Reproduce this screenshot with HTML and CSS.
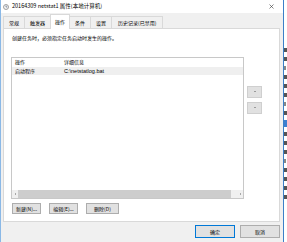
FILE: index.html
```html
<!DOCTYPE html>
<html lang="zh-CN">
<head>
    <meta charset="UTF-8">
    <title>20164309 netstat1 属性(本地计算机)</title>
    <link rel="stylesheet" href="styles.css">
</head>
<body>
    <div class="screen">
        <div class="dialog">
            <div class="titlebar">
                <svg class="app-icon" width="6" height="6" viewBox="0 0 6 6">
                    <circle cx="3" cy="3" r="2.5" fill="#f4f4f4" stroke="#8a8a8a" stroke-width="0.8"/>
                    <path d="M3 1.5 V3 H4.2" fill="none" stroke="#5b6f8a" stroke-width="0.7"/>
                </svg>
                <span class="title">20164309 netstat1 属性(本地计算机)</span>
                <svg class="close" width="5" height="5" viewBox="0 0 5 5">
                    <path d="M0.5 0.5 L4.5 4.5 M4.5 0.5 L0.5 4.5" stroke="#333" stroke-width="0.6"/>
                </svg>
            </div>

            <div class="tabs">
                <div class="tab">常规</div>
                <div class="tab">触发器</div>
                <div class="tab active">操作</div>
                <div class="tab">条件</div>
                <div class="tab">设置</div>
                <div class="tab wide">历史记录(已禁用)</div>
            </div>

            <div class="panel">
                <p class="hint">创建任务时，必须指定任务启动时发生的操作。</p>
                <div class="list-area">
                    <div class="listbox">
                        <div class="row head">
                            <span class="col-action">操作</span>
                            <span>详细信息</span>
                        </div>
                        <div class="row selected">
                            <span class="col-action">启动程序</span>
                            <span class="latin">C:\netstatlog.bat</span>
                        </div>
                        <div class="list-fill"></div>
                        <div class="hscroll">
                            <span class="arrow left"></span>
                            <div class="thumb"></div>
                            <span class="arrow right"></span>
                        </div>
                    </div>
                    <div class="updown">
                        <div class="ud-btn"><span class="tri up"></span></div>
                        <div class="ud-btn"><span class="tri down"></span></div>
                    </div>
                </div>
                <div class="actions">
                    <div class="btn w-new">新建(N)...</div>
                    <div class="btn w-edit">编辑(E)...</div>
                    <div class="btn w-del">删除(D)</div>
                </div>
            </div>

            <div class="footer">
                <div class="btn big primary">确定</div>
                <div class="btn big">取消</div>
            </div>
        </div>

        <!-- strip of the window behind the dialog -->
        <div class="edge">
            <i></i><i></i><i class="short"></i><i></i><i></i><i></i>
            <i class="short"></i><i></i><i class="hl"></i><i></i><i></i>
            <i></i><i class="short"></i><i></i><i></i><i></i><i></i>
        </div>
    </div>
</body>
</html>
```

FILE: styles.css
```css
body {
    margin: 0;
    background: #ffffff;
    font-family: "Noto Sans CJK SC", "Liberation Sans", sans-serif;
    font-size: 5px;
    color: #000;
}
.screen {
    display: flex;
    width: 287px;
    height: 242px;
    overflow: hidden;
}
.dialog {
    width: 282px;
    height: 242px;
    background: #f0f0f0;
    border-left: 1px solid #8ab8e6;
    border-right: 1px solid #3c7fc8;
    display: flex;
    flex-direction: column;
    flex-shrink: 0;
}
.titlebar {
    height: 13px;
    background: #fff;
    display: flex;
    align-items: center;
    padding-left: 2px;
}
.app-icon {
    margin-right: 3px;
}
.title {
    font-size: 5.5px;
    line-height: 13px;
    flex-grow: 1;
}
.close {
    margin-right: 9px;
}
.tabs {
    height: 15px;
    display: flex;
    align-items: flex-end;
    padding-left: 2px;
}
.tab {
    height: 11px;
    line-height: 11px;
    padding: 0 5px;
    border: 1px solid #d9d9d9;
    border-bottom: none;
    margin-right: -1px;
    background: #f0f0f0;
}
.tab.wide {
    padding: 0 6px;
}
.tab.active {
    height: 14px;
    line-height: 13px;
    background: #fff;
    position: relative;
    z-index: 1;
    margin-bottom: -1px;
    padding: 0 4px;
}
.panel {
    flex-grow: 1;
    margin: 0 3px 0 2px;
    background: #fff;
    border: 1px solid #d9d9d9;
    padding: 5px 7px 7px 7px;
    display: flex;
    flex-direction: column;
}
.hint {
    margin: 0 0 15px 1px;
    line-height: 8px;
}
.list-area {
    display: flex;
    align-items: flex-start;
}
.listbox {
    width: 231px;
    height: 140px;
    border: 1px solid #c8c8c8;
    display: flex;
    flex-direction: column;
}
.row {
    display: flex;
    height: 8px;
    line-height: 8px;
    padding-left: 3px;
}
.row.head {
    height: 9px;
    line-height: 8px;
}
.row.selected {
    background: #efefef;
}
.col-action {
    width: 49px;
}
.latin {
    font-family: "Liberation Sans", sans-serif;
    font-size: 5.5px;
}
.list-fill {
    flex-grow: 1;
}
.hscroll {
    height: 8px;
    display: flex;
    align-items: center;
    background: #f0f0f0;
}
.thumb {
    flex-grow: 1;
    height: 8px;
    background: #cdcdcd;
    margin-right: 6px;
}
.arrow {
    width: 6px;
    display: flex;
    justify-content: center;
}
.arrow::before {
    content: "";
    border-top: 1px solid transparent;
    border-bottom: 1px solid transparent;
}
.arrow.left::before {
    border-right: 1.5px solid #606060;
}
.arrow.right::before {
    border-left: 1.5px solid #606060;
}
.updown {
    margin: 29px 0 0 3px;
    display: flex;
    flex-direction: column;
    gap: 4px;
}
.ud-btn {
    width: 13px;
    height: 10px;
    background: #e1e1e1;
    border: 0.5px solid #cfcfcf;
    display: flex;
    justify-content: center;
    align-items: center;
}
.tri {
    width: 0;
    height: 0;
    border-left: 1px solid transparent;
    border-right: 1px solid transparent;
}
.tri.up {
    border-bottom: 1.2px solid #555;
}
.tri.down {
    border-top: 1.2px solid #555;
}
.actions {
    display: flex;
    gap: 8px;
    margin-top: 4px;
    padding-left: 1px;
}
.btn {
    height: 9px;
    line-height: 9px;
    background: #e1e1e1;
    border: 1px solid #adadad;
    text-align: center;
}
.w-new {
    width: 27px;
}
.w-edit {
    width: 27px;
}
.w-del {
    width: 31px;
}
.footer {
    height: 21px;
    display: flex;
    justify-content: flex-end;
    align-items: center;
    gap: 5px;
    padding-right: 3px;
}
.btn.big {
    width: 38px;
    height: 11px;
    line-height: 11px;
}
.btn.primary {
    border-color: #0078d7;
}
.edge {
    flex-grow: 1;
    display: flex;
    flex-direction: column;
    gap: 5px;
    padding-top: 48px;
    overflow: hidden;
}
.edge i {
    display: block;
    height: 4px;
    width: 3px;
    background: #555;
}
.edge i.short {
    width: 2px;
    background: #888;
}
.edge i.hl {
    height: 7px;
    background: #3d7fd0;
}
```
